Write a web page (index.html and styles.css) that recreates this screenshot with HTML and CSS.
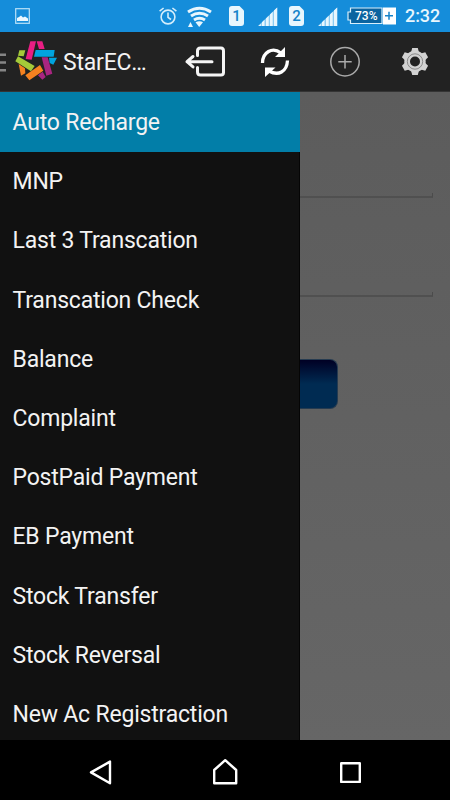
FILE: index.html
```html
<!DOCTYPE html>
<html lang="en">
<head>
<meta charset="utf-8">
<title>StarEC</title>
<link rel="stylesheet" href="styles.css">
</head>
<body>
<div class="phone">
  <header class="status">
    <svg class="picture" width="16" height="32" viewBox="15 0 16 32"><rect x="15.700" y="8.700" width="13.600" height="14.600" fill="none" stroke="#b9e2f8" stroke-width="1.200"/><path d="M17 21v-3l2-1 2-1.500 2 2 2-1 3 2v2.500z" fill="#e8f7ff"/></svg>
    <svg class="alarm" width="20" height="32" viewBox="158 0 20 32"><g fill="none" stroke="#d4edfb" stroke-width="1.600"><circle cx="168" cy="17" r="6.900"/><path d="M168 12.500v4.800l3 2.200M159.600 11.200l4-3.200M176.400 11.200l-4-3.200"/></g></svg>
    <svg class="wifi" width="25" height="32" viewBox="187 0 25 32"><g fill="none" stroke="#e8f6fd" stroke-width="3"><path d="M188 12Q199.500 4.500 211 12M191 16Q199.500 10.500 208 16M194 20Q199.500 16.500 205 20"/></g><path d="M195.500 22.200q4-2 7.500 0L199.200 27zM188 27h5l-2.500-5z" fill="#e8f6fd"/></svg>
    <div class="sim">1</div>
    <svg class="signal" width="20" height="32" viewBox="258 0 20 32"><path d="M258 26l19.200-18.500V26z" fill="#8ccbf2"/><path d="M258.500 26l2.300-2.200V26zM262 26v-3.700l2.500-2.500V26zM266 26v-7.600l2.700-2.700V26zM270 26V14.500l2.700-2.700V26zM274 26V10.500l3.200-3V26z" fill="#e8f6fd"/></svg>
    <div class="sim">2</div>
    <svg class="signal" width="20" height="32" viewBox="258 0 20 32"><path d="M258 26l19.200-18.500V26z" fill="#8ccbf2"/><path d="M258.500 26l2.300-2.200V26zM262 26v-3.700l2.500-2.500V26zM266 26v-7.600l2.700-2.700V26zM270 26V14.500l2.700-2.700V26zM274 26V10.500l3.200-3V26z" fill="#e8f6fd"/></svg>
    <svg class="battery" width="50" height="32" viewBox="347 0 50 32"><path d="M350.500 8H382v15.500h-31.500V20H348v-8h2.500z" fill="#0b64a0" stroke="#d9effb" stroke-width="1.200"/><path d="M383 7.500h13v17h-13z" fill="#fff"/><path d="M385 15.700h8M389 11.700v8" stroke="#1683c9" stroke-width="1.500"/><text x="355" y="20.300" class="percent" textLength="22.500">73%</text></svg>
    <time>2:32</time>
  </header>
  <div class="appbar">
    <svg class="menu" width="7" height="59" viewBox="0 32 7 59"><path d="M0 54.700h6M0 62.500h6M0 70.200h6" stroke="#858585" stroke-width="2.600"/></svg>
    <svg class="logo" width="44" height="59" viewBox="14 32 44 59"><g transform="translate(10 36) scale(.3333)"><path fill="#e91e83" d="M61 16h17L65 71 47 69zM80 16h17l7 23H87z"/><path fill="#00a4df" d="M77 42h57l-3 20H72zM117 65h24l-11 21-11-5z"/><path fill="#a4ca39" d="M24 61l50 29-11 16-47-30zM28 43h18l-5 18-17-2z"/><path fill="#f58220" d="M90 87l10 17-42 29-12-15zM26 84l19 13 1 15-13 7z"/><path fill="#a92581" d="M95 64h18l14 49-18 6zM84 118l14-11 9 16-10 8z"/></g></svg>
    <h1>StarEC…</h1>
    <svg class="exit" width="42" height="59" viewBox="184 32 42 59"><g fill="none" stroke="#f5f5f5" stroke-width="3" stroke-linecap="round" stroke-linejoin="round"><path d="M197.500 55.500V51q0-3 3-3H221q2.500 0 2.500 3v21.500q0 2.500-2.500 2.500h-20.500q-3 0-3-3v-4.500M187 61.700h25M193 56.500l-6 5.200 6 5.200"/></g></svg>
    <svg class="refresh" width="30" height="59" viewBox="260 32 30 59"><g fill="none" stroke="#fff" stroke-width="3.300"><path d="M262.500 63Q262.500 55 268.500 51.500T281 53M287.500 60.500Q287 69 281.500 72T269 71"/></g><path fill="#fff" d="M285 47v10h-10zM265 77V67.500h10.500z"/></svg>
    <svg class="add" width="32" height="59" viewBox="329 32 32 59"><g fill="none" stroke="#aaa" stroke-width="1.500"><circle cx="345" cy="61.700" r="14.200"/><path d="M338.300 61.700h13.400M345 55v13.400"/></g></svg>
    <svg class="gear" width="28" height="59" viewBox="401 32 28 59"><g transform="translate(415 61.500)"><g fill="#d2d2d2"><circle r="10.700"/><path id="tooth" d="M-4-9l1.200-4.500h5.600L4-9V9l-1.200 4.500h-5.600L-4 9z"/><use href="#tooth" transform="rotate(60)"/><use href="#tooth" transform="rotate(120)"/></g><circle r="5" fill="#222"/><circle r="7.700" fill="none" stroke="#777" stroke-width=".8"/></g></svg>
  </div>
  <main>
    <nav class="drawer">
      <a class="active">Auto Recharge</a>
      <a>MNP</a>
      <a>Last 3 Transcation</a>
      <a>Transcation Check</a>
      <a>Balance</a>
      <a>Complaint</a>
      <a>PostPaid Payment</a>
      <a>EB Payment</a>
      <a>Stock Transfer</a>
      <a>Stock Reversal</a>
      <a>New Ac Registraction</a>
    </nav>
    <section class="form">
      <div class="field first"></div>
      <div class="field second"></div>
      <div class="submit"></div>
    </section>
  </main>
  <footer>
    <svg width="450" height="60" viewBox="0 740 450 60"><g fill="none" stroke="#fff" stroke-width="2.400" stroke-linejoin="round"><path d="M91 772.400l19-10.800v21.600zM214.200 783.300V770l11-9.800 11 9.800v13.300zM341.200 763.300h18.600v18.600h-18.600z"/></g></svg>
  </footer>
</div>
</body>
</html>
```
FILE: styles.css
```css
* { box-sizing: border-box; }
body { margin: 0; font-family: Roboto, sans-serif; }
svg { display: block; flex: none; }
.phone { width: 450px; height: 800px; display: flex; flex-direction: column; overflow: hidden; background: #000; }
.status { height: 32px; flex: none; display: flex; align-items: center; background: #158dda; color: #e8f6fd; }
.picture { margin-left: 15px; }
.alarm { margin-left: 127px; }
.wifi { margin-left: 9px; }
.sim { width: 15px; height: 20px; margin-left: 17px; border-radius: 3px; background: #e8f6fd; color: #1683c9; font-size: 15px; font-weight: 500; line-height: 21px; text-align: center; clip-path: polygon(0 0, 70% 0, 100% 22%, 100% 100%, 0 100%); }
.signal { margin-left: 14px; }
.signal + .sim { margin-left: 11px; }
.battery { margin-left: 9px; }
.percent { font-size: 12px; font-weight: 500; fill: #fff; }
time { margin-left: 8px; font-size: 18px; font-weight: 500; line-height: 32px; letter-spacing: -.1px; white-space: nowrap; }
.appbar { height: 60px; flex: none; display: flex; background: #222; border-bottom: 1px solid #343434; }
.logo { margin-left: 7px; }
h1 { width: 84px; margin: 0 0 0 5px; font-size: 23px; font-weight: 400; line-height: 61px; letter-spacing: -.2px; color: #f3f3f3; white-space: nowrap; }
.exit { margin-left: 37px; }
.refresh { margin-left: 34px; }
.add { margin-left: 39px; }
.gear { margin-left: 40px; }
main { height: 648px; flex: none; display: flex; background: linear-gradient(#5c5c5c, #666); }
.drawer { width: 300px; flex: none; background: linear-gradient(90deg, #111 299px, #050505 299px); overflow: hidden; }
.drawer a { display: block; height: 59.2px; padding-left: 12.5px; font-size: 23px; line-height: 61.5px; letter-spacing: -.2px; color: #f3f3f3; white-space: nowrap; }
.drawer .active { height: 60px; margin-bottom: -.8px; background: #027ea8; }
.form { flex: 1; }
.field { width: 133px; height: 5px; border-right: 1px solid #4b4b4b; border-bottom: 2px solid #505050; }
.first { margin-top: 101px; }
.second { margin-top: 94px; }
.submit { width: 38px; height: 50px; margin-top: 62px; border: solid #263b50; border-width: 1px 1px 1px 0; border-radius: 0 8px 8px 0; background: linear-gradient(#000024, #002b52 50%, #002b52); }
footer { height: 60px; flex: none; background: #000; }
```
